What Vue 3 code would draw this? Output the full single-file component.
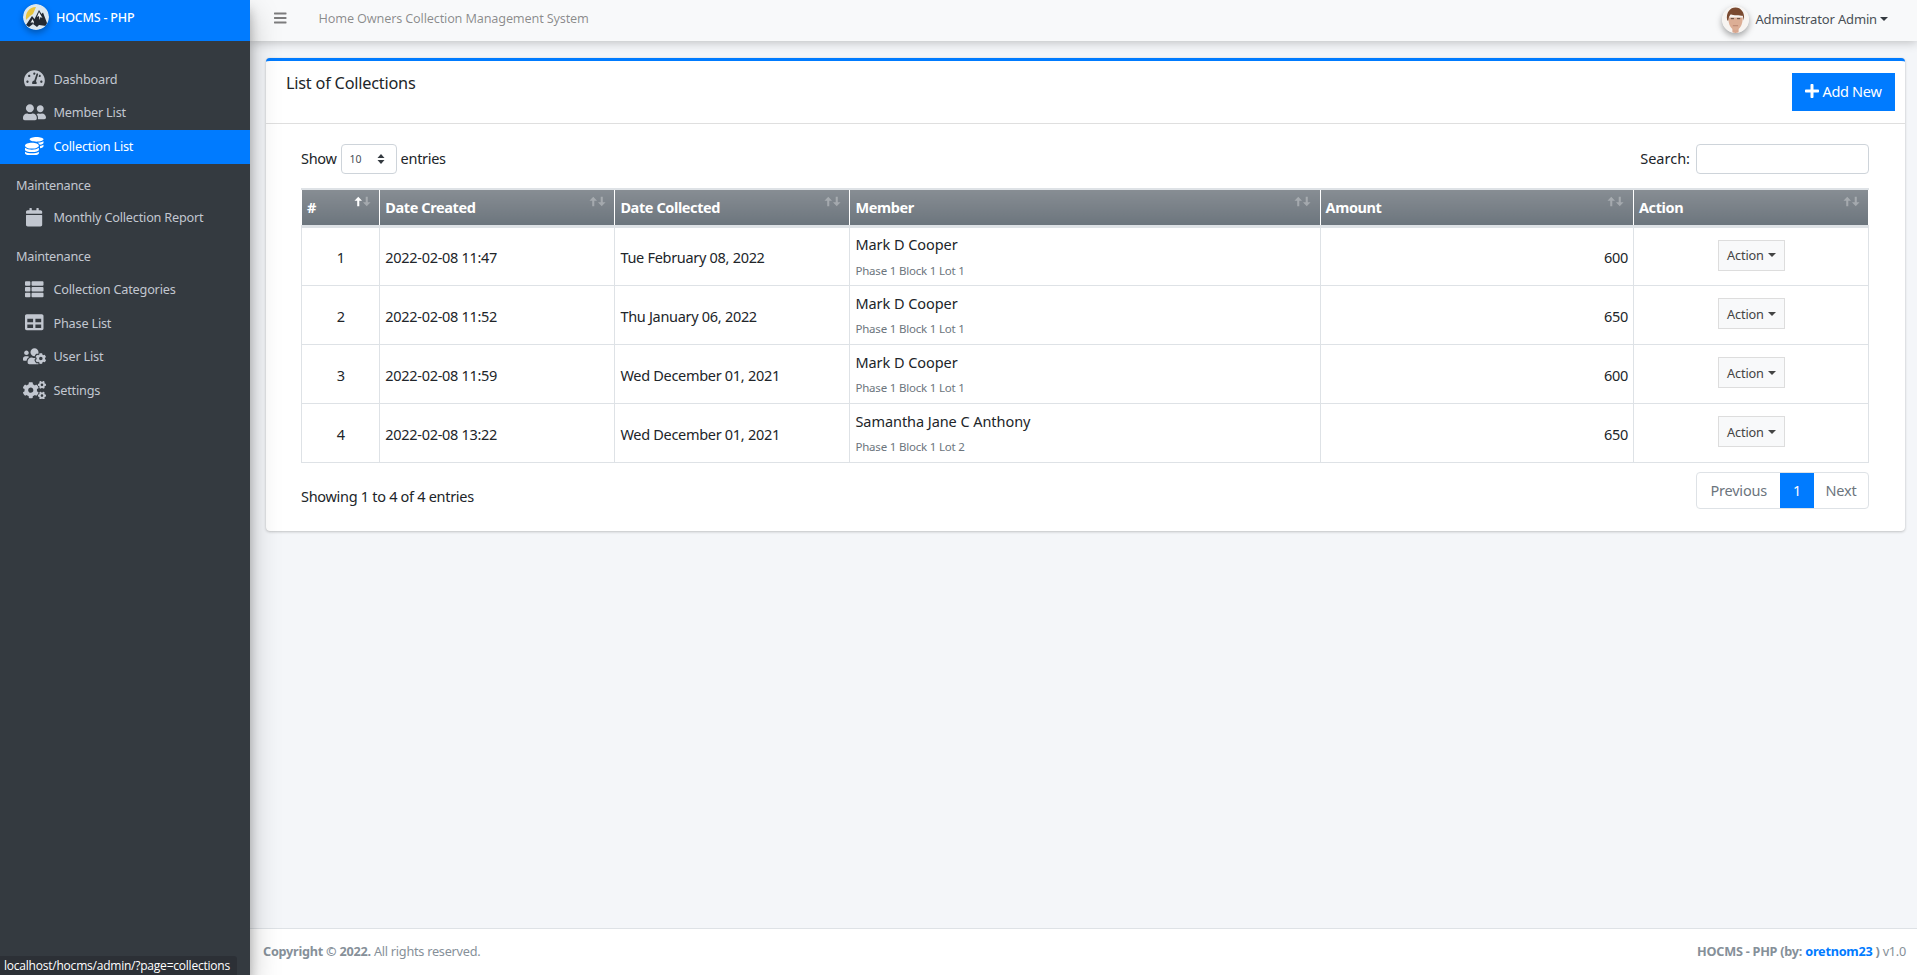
<script setup>
const icons = {
  gauge: ['0 0 576 512', 'M288 32C128.94 32 0 160.94 0 320c0 52.8 14.25 102.26 39.06 144.8 5.61 9.62 16.3 15.2 27.44 15.2h443c11.14 0 21.83-5.58 27.44-15.2C561.75 422.26 576 372.8 576 320c0-159.06-128.94-288-288-288zm0 64c14.71 0 26.58 10.13 30.32 23.65-1.11 2.26-2.64 4.23-3.45 6.67l-9.22 27.67c-5.13 3.49-10.97 6.01-17.64 6.01-17.67 0-32-14.33-32-32S270.33 96 288 96zM96 384c-17.67 0-32-14.33-32-32s14.33-32 32-32 32 14.33 32 32-14.33 32-32 32zm48-160c-17.67 0-32-14.33-32-32s14.33-32 32-32 32 14.33 32 32-14.33 32-32 32zm246.77-72.41l-61.33 184C343.13 347.33 352 364.54 352 384c0 11.72-3.38 22.55-8.88 32H232.88c-5.5-9.45-8.88-20.28-8.88-32 0-33.94 26.5-61.43 59.9-63.59l61.34-184.01c4.17-12.56 17.73-19.45 30.36-15.17 12.57 4.19 19.35 17.79 15.17 30.36zm14.66 57.2l15.52-46.55c3.47-1.29 7.13-2.23 11.05-2.23 17.67 0 32 14.33 32 32s-14.33 32-32 32c-11.38-.01-20.89-6.28-26.57-15.22zM480 384c-17.67 0-32-14.33-32-32s14.33-32 32-32 32 14.33 32 32-14.33 32-32 32z'],
  friends: ['0 0 640 512', 'M192 256c61.9 0 112-50.1 112-112S253.9 32 192 32 80 82.1 80 144s50.1 112 112 112zm76.8 32h-8.3c-20.8 10-43.9 16-68.5 16s-47.6-6-68.5-16h-8.3C51.6 288 0 339.6 0 403.2V432c0 26.5 21.5 48 48 48h288c26.5 0 48-21.5 48-48v-28.8c0-63.6-51.6-115.2-115.2-115.2zM480 256c53 0 96-43 96-96s-43-96-96-96-96 43-96 96 43 96 96 96zm48 32h-3.8c-13.9 4.8-28.6 8-44.2 8s-30.3-3.2-44.2-8H432c-20.4 0-39.2 5.9-55.7 15.4 24.4 26.3 39.7 61.2 39.7 99.8v38.4c0 2.2-.5 4.3-.6 6.4H592c26.5 0 48-21.5 48-48 0-61.9-50.1-112-112-112z'],
  coins: ['0 0 512 512', 'M0 405.3V448c0 35.3 86 64 192 64s192-28.7 192-64v-42.7C342.7 434.4 267.2 448 192 448S41.3 434.4 0 405.3zM320 128c106 0 192-28.7 192-64S426 0 320 0 128 28.7 128 64s86 64 192 64zM0 300.4V352c0 35.3 86 64 192 64s192-28.7 192-64v-51.6c-41.3 34-116.9 51.6-192 51.6S41.3 334.4 0 300.4zm416 11c57.3-11.1 96-31.7 96-55.4v-42.7c-23.2 16.4-57.3 27.6-96 34.5v63.6zM192 160C86 160 0 195.8 0 240s86 80 192 80 192-35.8 192-80-86-80-192-80zm219.3 56.3c60-10.8 100.7-32 100.7-56.3v-42.7c-35.5 25.1-96.5 38.6-160.7 41.8 29.5 14.3 51.2 33.5 60 57.2z'],
  calendar: ['0 0 448 512', 'M12 192h424c6.6 0 12 5.4 12 12v260c0 26.5-21.5 48-48 48H48c-26.5 0-48-21.5-48-48V204c0-6.6 5.4-12 12-12zm436-44v-36c0-26.5-21.5-48-48-48h-48V12c0-6.6-5.4-12-12-12h-40c-6.6 0-12 5.4-12 12v52H160V12c0-6.6-5.4-12-12-12h-40c-6.6 0-12 5.4-12 12v52H48C21.5 64 0 85.5 0 112v36c0 6.6 5.4 12 12 12h424c6.6 0 12-5.4 12-12z'],
  thList: ['0 0 512 512', 'M149.333 216v80c0 13.255-10.745 24-24 24H24c-13.255 0-24-10.745-24-24v-80c0-13.255 10.745-24 24-24h101.333c13.255 0 24 10.745 24 24zM0 376v80c0 13.255 10.745 24 24 24h101.333c13.255 0 24-10.745 24-24v-80c0-13.255-10.745-24-24-24H24c-13.255 0-24 10.745-24 24zM125.333 32H24C10.745 32 0 42.745 0 56v80c0 13.255 10.745 24 24 24h101.333c13.255 0 24-10.745 24-24V56c0-13.255-10.745-24-24-24zm80 448H488c13.255 0 24-10.745 24-24v-80c0-13.255-10.745-24-24-24H205.333c-13.255 0-24 10.745-24 24v80c0 13.255 10.745 24 24 24zm-24-424v80c0 13.255 10.745 24 24 24H488c13.255 0 24-10.745 24-24V56c0-13.255-10.745-24-24-24H205.333c-13.255 0-24 10.745-24 24zm24 264H488c13.255 0 24-10.745 24-24v-80c0-13.255-10.745-24-24-24H205.333c-13.255 0-24 10.745-24 24v80c0 13.255 10.745 24 24 24z'],
  table: ['0 0 512 512', 'M464 32H48C21.49 32 0 53.49 0 80v352c0 26.51 21.49 48 48 48h416c26.51 0 48-21.49 48-48V80c0-26.51-21.49-48-48-48zM224 416H64v-96h160v96zm0-160H64v-96h160v96zm224 160H288v-96h160v96zm0-160H288v-96h160v96z'],
  usersCog: ['0 0 640 512', 'M610.5 341.3c2.6-14.1 2.6-28.5 0-42.6l25.8-14.9c3-1.7 4.3-5.2 3.3-8.5-6.7-21.6-18.2-41.2-33.2-57.4-2.3-2.5-6-3.1-9-1.4l-25.8 14.9c-10.9-9.3-23.4-16.5-36.9-21.3v-29.8c0-3.4-2.4-6.4-5.7-7.1-22.3-5-45-4.8-66.2 0-3.3.7-5.7 3.7-5.7 7.1v29.8c-13.5 4.8-26 12-36.9 21.3l-25.8-14.9c-2.9-1.7-6.7-1.1-9 1.4-15 16.2-26.5 35.8-33.2 57.4-1 3.3.4 6.8 3.3 8.5l25.8 14.9c-2.6 14.1-2.6 28.5 0 42.6l-25.8 14.9c-3 1.7-4.3 5.2-3.3 8.5 6.7 21.6 18.2 41.1 33.2 57.4 2.3 2.5 6 3.1 9 1.4l25.8-14.9c10.9 9.3 23.4 16.5 36.9 21.3v29.8c0 3.4 2.4 6.4 5.7 7.1 22.3 5 45 4.8 66.2 0 3.3-.7 5.7-3.7 5.7-7.1v-29.8c13.5-4.8 26-12 36.9-21.3l25.8 14.9c2.9 1.7 6.7 1.1 9-1.4 15-16.2 26.5-35.8 33.2-57.4 1-3.3-.4-6.8-3.3-8.5l-25.8-14.9zM496 368.5c-26.8 0-48.5-21.8-48.5-48.5s21.8-48.5 48.5-48.5 48.5 21.8 48.5 48.5-21.7 48.5-48.5 48.5zM96 224c35.3 0 64-28.7 64-64s-28.7-64-64-64-64 28.7-64 64 28.7 64 64 64zm224 32c1.9 0 3.7-.5 5.6-.6 8.3-21.7 20.5-42.1 36.3-59.2 7.4-8 17.9-12.6 28.9-12.6 6.9 0 13.7 1.8 19.6 5.3l7.9 4.6c.8-.5 1.6-.9 2.4-1.4 7-14.6 11.2-30.8 11.2-48 0-61.9-50.1-112-112-112S208 82.1 208 144c0 61.9 50.1 112 112 112zm105.2 194.5c-2.3-1.2-4.6-2.6-6.8-3.9-8.2 4.8-15.3 9.8-27.5 9.8-10.9 0-21.4-4.6-28.9-12.6-18.3-19.8-32.3-43.9-40.2-69.6-10.7-34.5 24.9-49.7 25.8-50.3-.1-2.6-.1-5.2 0-7.8l-7.9-4.6c-3.8-2.2-7-5-9.8-8.1-3.3.2-6.5.6-9.8.6-24.6 0-47.6-6-68.5-16h-8.3C179.6 288 128 339.6 128 403.2V432c0 26.5 21.5 48 48 48h255.4c-3.7-6-6.2-12.8-6.2-20.3v-9.2zM173.1 274.6C161.5 263.1 145.6 256 128 256H64c-35.3 0-64 28.7-64 64v32c0 17.7 14.3 32 32 32h65.9c6.3-47.4 34.9-87.3 75.2-109.4z'],
  cogs: ['0 0 640 512', 'M512.1 191l-8.2 14.3c-3 5.3-9.4 7.5-15.1 5.4-11.8-4.4-22.6-10.7-32.1-18.6-4.6-3.8-5.8-10.5-2.8-15.7l8.2-14.3c-6.9-8-12.3-17.3-15.9-27.4h-16.5c-6 0-11.2-4.3-12.2-10.3-2-12-2.1-24.6 0-37.1 1-6 6.2-10.4 12.2-10.4h16.5c3.6-10.1 9-19.4 15.9-27.4l-8.2-14.3c-3-5.2-1.9-11.9 2.8-15.7 9.5-7.9 20.4-14.2 32.1-18.6 5.7-2.1 12.1.1 15.1 5.4l8.2 14.3c10.5-1.9 21.2-1.9 31.7 0L552 6.3c3-5.3 9.4-7.5 15.1-5.4 11.8 4.4 22.6 10.7 32.1 18.6 4.6 3.8 5.8 10.5 2.8 15.7l-8.2 14.3c6.9 8 12.3 17.3 15.9 27.4h16.5c6 0 11.2 4.3 12.2 10.3 2 12 2.1 24.6 0 37.1-1 6-6.2 10.4-12.2 10.4h-16.5c-3.6 10.1-9 19.4-15.9 27.4l8.2 14.3c3 5.2 1.9 11.9-2.8 15.7-9.5 7.9-20.4 14.2-32.1 18.6-5.7 2.1-12.1-.1-15.1-5.4l-8.2-14.3c-10.4 1.9-21.2 1.9-31.7 0zm-10.5-58.8c38.5 29.6 82.4-14.3 52.8-52.8-38.5-29.7-82.4 14.3-52.8 52.8zM386.3 286.1l33.7 16.8c10.1 5.8 14.5 18.1 10.5 29.1-8.9 24.2-26.4 46.4-42.6 65.8-7.4 8.9-20.2 11.1-30.3 5.3l-29.1-16.8c-16 13.7-34.6 24.6-54.9 31.7v33.6c0 11.6-8.3 21.6-19.7 23.6-24.6 4.2-50.4 4.4-75.9 0-11.5-2-20-11.9-20-23.6V418c-20.3-7.2-38.9-18-54.9-31.7L74 403c-10 5.8-22.9 3.6-30.3-5.3-16.2-19.4-33.3-41.6-42.2-65.7-4-10.9.4-23.2 10.5-29.1l33.3-16.8c-3.9-20.9-3.9-42.4 0-63.4L12 205.8c-10.1-5.8-14.6-18.1-10.5-29 8.9-24.2 26-46.4 42.2-65.8 7.4-8.9 20.2-11.1 30.3-5.3l29.1 16.8c16-13.7 34.6-24.6 54.9-31.7V57.1c0-11.5 8.2-21.5 19.6-23.5 24.6-4.2 50.5-4.4 76-.1 11.5 2 20 11.9 20 23.6v33.6c20.3 7.2 38.9 18 54.9 31.7l29.1-16.8c10-5.8 22.9-3.6 30.3 5.3 16.2 19.4 33.2 41.6 42.1 65.8 4 10.9.1 23.2-10 29.1l-33.7 16.8c3.9 21 3.9 42.5 0 63.5zm-117.6 21.1c59.2-77-28.7-164.9-105.7-105.7-59.2 77 28.7 164.9 105.7 105.7zm243.4 182.7l-8.2 14.3c-3 5.3-9.4 7.5-15.1 5.4-11.8-4.4-22.6-10.7-32.1-18.6-4.6-3.8-5.8-10.5-2.8-15.7l8.2-14.3c-6.9-8-12.3-17.3-15.9-27.4h-16.5c-6 0-11.2-4.3-12.2-10.3-2-12-2.1-24.6 0-37.1 1-6 6.2-10.4 12.2-10.4h16.5c3.6-10.1 9-19.4 15.9-27.4l-8.2-14.3c-3-5.2-1.9-11.9 2.8-15.7 9.5-7.9 20.4-14.2 32.1-18.6 5.7-2.1 12.1.1 15.1 5.4l8.2 14.3c10.5-1.9 21.2-1.9 31.7 0l8.2-14.3c3-5.3 9.4-7.5 15.1-5.4 11.8 4.4 22.6 10.7 32.1 18.6 4.6 3.8 5.8 10.5 2.8 15.7l-8.2 14.3c6.9 8 12.3 17.3 15.9 27.4h16.5c6 0 11.2 4.3 12.2 10.3 2 12 2.1 24.6 0 37.1-1 6-6.2 10.4-12.2 10.4h-16.5c-3.6 10.1-9 19.4-15.9 27.4l8.2 14.3c3 5.2 1.9 11.9-2.8 15.7-9.5 7.9-20.4 14.2-32.1 18.6-5.7 2.1-12.1-.1-15.1-5.4l-8.2-14.3c-10.4 1.9-21.2 1.9-31.7 0zM501.6 431c38.5 29.6 82.4-14.3 52.8-52.8-38.5-29.6-82.4 14.3-52.8 52.8z'],
}

const barsPath = 'M16 132h416c8.837 0 16-7.163 16-16V76c0-8.837-7.163-16-16-16H16C7.163 60 0 67.163 0 76v40c0 8.837 7.163 16 16 16zm0 160h416c8.837 0 16-7.163 16-16v-40c0-8.837-7.163-16-16-16H16c-8.837 0-16 7.163-16 16v40c0 8.837 7.163 16 16 16zm0 160h416c8.837 0 16-7.163 16-16v-40c0-8.837-7.163-16-16-16H16c-8.837 0-16 7.163-16 16v40c0 8.837 7.163 16 16 16z'
const plusPath = 'M416 208H272V64c0-17.67-14.33-32-32-32h-32c-17.67 0-32 14.33-32 32v144H32c-17.67 0-32 14.33-32 32v32c0 17.67 14.33 32 32 32h144v144c0 17.67 14.33 32 32 32h32c17.67 0 32-14.33 32-32V304h144c17.67 0 32-14.33 32-32v-32c0-17.67-14.33-32-32-32z'

const menu = [
  { label: 'Dashboard', icon: 'gauge' },
  { label: 'Member List', icon: 'friends' },
  { label: 'Collection List', icon: 'coins', active: true },
  { header: 'Maintenance' },
  { label: 'Monthly Collection Report', icon: 'calendar' },
  { header: 'Maintenance' },
  { label: 'Collection Categories', icon: 'thList' },
  { label: 'Phase List', icon: 'table' },
  { label: 'User List', icon: 'usersCog' },
  { label: 'Settings', icon: 'cogs' },
]

const columns = [
  { label: '#', width: '5%', sorted: true },
  { label: 'Date Created', width: '15%' },
  { label: 'Date Collected', width: '15%' },
  { label: 'Member', width: '30%' },
  { label: 'Amount', width: '20%' },
  { label: 'Action', width: '15%' },
]

const rows = [
  { id: 1, created: '2022-02-08 11:47', collected: 'Tue February 08, 2022', name: 'Mark D Cooper', lot: 'Phase 1 Block 1 Lot 1', amount: 600 },
  { id: 2, created: '2022-02-08 11:52', collected: 'Thu January 06, 2022', name: 'Mark D Cooper', lot: 'Phase 1 Block 1 Lot 1', amount: 650 },
  { id: 3, created: '2022-02-08 11:59', collected: 'Wed December 01, 2021', name: 'Mark D Cooper', lot: 'Phase 1 Block 1 Lot 1', amount: 600 },
  { id: 4, created: '2022-02-08 13:22', collected: 'Wed December 01, 2021', name: 'Samantha Jane C Anthony', lot: 'Phase 1 Block 1 Lot 2', amount: 650 },
]
</script>

<template>
  <div class="wrapper">
    <aside class="sidebar">
      <div class="brand">
        <svg class="logo" viewBox="0 0 26 26">
          <defs>
            <clipPath id="logo-clip"><circle cx="13" cy="13" r="13" /></clipPath>
          </defs>
          <g clip-path="url(#logo-clip)">
            <rect width="26" height="26" fill="#dde8ef" />
            <path d="M3 16C2 9 6 3 13 3l-3 7-3 2z" fill="#e8c53f" />
            <path d="M3 21l6-9 2.500 3 4.500-9 2.500 4 1.500-1.500L24 19l-1 3-7-1-2 2-4-3-4 3z" fill="#232a33" />
            <path d="M16 8l-2 5 2-1 .5 4 1-3 2 1zM9.500 15l-2 4 2-1 .5 2 1-2z" fill="#eef3f6" />
          </g>
        </svg>
        <span class="brand-text">HOCMS - PHP</span>
      </div>
      <nav class="menu">
        <template v-for="(item, i) in menu" :key="i">
          <div v-if="item.header" class="menu-header">{{ item.header }}</div>
          <a v-else :class="['menu-link', { active: item.active }]">
            <span class="menu-icon">
              <svg :viewBox="icons[item.icon][0]"><path :d="icons[item.icon][1]" /></svg>
            </span>
            <span class="menu-label">{{ item.label }}</span>
          </a>
        </template>
      </nav>
    </aside>

    <div class="main">
      <header class="navbar">
        <svg class="bars" viewBox="0 0 448 512"><path :d="barsPath" /></svg>
        <span class="nav-title">Home Owners Collection Management System</span>
        <div class="user">
          <svg class="avatar" viewBox="0 0 26 26">
            <defs>
              <clipPath id="avatar-clip"><circle cx="13" cy="13" r="13" /></clipPath>
            </defs>
            <g clip-path="url(#avatar-clip)">
              <rect width="26" height="26" fill="#f7f4f1" />
              <path d="M10 20h6v6h-6z" fill="#d8a78f" />
              <path d="M6 11c0 7 3 12 7 12s7-5 7-12z" fill="#dcae95" />
              <path d="M5 14C3.500 6 8 1.500 13 1.500S22.500 6 21 14L20 9.500C17 9 11 9.500 8.500 8 7 9.500 6.500 11 6 14z" fill="#7a4a30" />
              <rect x="8.500" y="11.500" width="3" height="1.200" fill="#6d5546" />
              <rect x="14.500" y="11.500" width="3" height="1.200" fill="#6d5546" />
              <path d="M10.500 19h5" stroke="#b27d68" stroke-width=".8" />
            </g>
          </svg>
          <span class="user-name">Adminstrator Admin</span>
          <span class="caret"></span>
        </div>
      </header>

      <main class="content">
        <section class="card">
          <div class="card-header">
            <h3 class="card-title">List of Collections</h3>
            <button class="btn-add">
              <svg viewBox="0 0 448 512"><path :d="plusPath" /></svg>
              Add New
            </button>
          </div>
          <div class="card-body">
            <div class="table-tools">
              <label class="length">
                Show
                <span class="select-wrap">
                  <select class="length-select"><option>10</option></select>
                  <svg class="select-arrows" viewBox="0 0 8 12"><path d="M4 1l3.500 4h-7zM4 11L.500 7h7z" /></svg>
                </span>
                entries
              </label>
              <label class="search">
                Search:
                <input class="search-input" type="search" />
              </label>
            </div>

            <table class="data-table">
              <colgroup>
                <col v-for="c in columns" :key="c.label" :style="{ width: c.width }" />
              </colgroup>
              <thead>
                <tr>
                  <th v-for="c in columns" :key="c.label">
                    {{ c.label }}
                    <svg class="sort-arrows" viewBox="0 0 18 11">
                      <path :class="{ on: c.sorted }" d="M4.500.500l4 4.200H5.600v5.800H3.400V4.700H.500z" />
                      <path d="M13.500 10.500l-4-4.200h2.900V.500h2.200v5.800h2.900z" />
                    </svg>
                  </th>
                </tr>
              </thead>
              <tbody>
                <tr v-for="r in rows" :key="r.id">
                  <td class="center">{{ r.id }}</td>
                  <td>{{ r.created }}</td>
                  <td>{{ r.collected }}</td>
                  <td>
                    <div class="member-name">{{ r.name }}</div>
                    <div class="member-lot">{{ r.lot }}</div>
                  </td>
                  <td class="right">{{ r.amount }}</td>
                  <td class="center">
                    <button class="btn-action">Action<span class="caret small"></span></button>
                  </td>
                </tr>
              </tbody>
            </table>

            <div class="table-foot">
              <div class="table-info">Showing 1 to 4 of 4 entries</div>
              <div class="pager">
                <a class="page">Previous</a>
                <a class="page current">1</a>
                <a class="page">Next</a>
              </div>
            </div>
          </div>
        </section>
      </main>

      <footer class="footer">
        <div><strong>Copyright © 2022.</strong> All rights reserved.</div>
        <div><strong>HOCMS - PHP (by: <a class="author">oretnom23</a> )</strong> v1.0</div>
      </footer>
    </div>

    <div class="status-bar">localhost/hocms/admin/?page=collections</div>
  </div>
</template>

<style>
html, body {
  margin: 0;
  height: 100%;
  overflow: hidden;
}
</style>

<style scoped>
.wrapper {
  display: flex;
  height: 975px;
  font-family: "Noto Sans", "Open Sans", sans-serif;
  font-size: 14.5px;
  letter-spacing: -0.3px;
  color: #212529;
  background: #f4f6f9;
}

.sidebar {
  position: relative;
  z-index: 3;
  flex: 0 0 250px;
  background: #343a40;
  box-shadow: 0 14px 28px rgba(0, 0, 0, .25), 0 10px 10px rgba(0, 0, 0, .22);
}

.brand {
  display: flex;
  align-items: center;
  height: 41px;
  padding: 0 0 7px 23px;
  box-sizing: border-box;
  background: #007bff;
  color: #fff;
}

.logo {
  width: 26px;
  height: 26px;
  border-radius: 50%;
  box-shadow: 0 3px 6px rgba(0, 0, 0, .3);
}

.brand-text {
  margin-left: 7px;
  font-size: 12.500px;
  font-weight: 500;
  letter-spacing: -0.2px;
}

.menu {
  padding-top: 21.800px;
}

.menu-link {
  display: flex;
  align-items: center;
  height: 33.600px;
  padding-left: 23px;
  box-sizing: border-box;
  font-size: 12.700px;
  letter-spacing: -0.2px;
  color: #c2c7d0;
}

.menu-link.active {
  background: #007bff;
  color: #fff;
}

.menu-icon {
  display: flex;
  justify-content: center;
  width: 23px;
  margin-right: 7.500px;
  margin-bottom: 2px;
}

.menu-icon svg {
  height: 18.500px;
  max-width: 23px;
  fill: currentColor;
}

.menu-label {
  padding-bottom: 2px;
}

.menu-header {
  height: 38px;
  padding: 12px 0 0 16px;
  box-sizing: border-box;
  font-size: 12.700px;
  letter-spacing: -0.25px;
  color: #c2c7d0;
}

.main {
  flex: 1;
  display: flex;
  flex-direction: column;
  min-width: 0;
}

.navbar {
  position: relative;
  z-index: 2;
  display: flex;
  align-items: center;
  height: 41px;
  padding-left: 24px;
  box-sizing: border-box;
  background: #f8f9fa;
  box-shadow: 0 1px 10px rgba(0, 0, 0, .25);
}

.bars {
  width: 12.500px;
  height: 16px;
  fill: rgba(0, 0, 0, .5);
  margin-bottom: 5px;
}

.nav-title {
  margin: 0 0 0 32px;
  padding-bottom: 5px;
  font-size: 12.700px;
  letter-spacing: -0.18px;
  color: rgba(0, 0, 0, .45);
}

.user {
  display: flex;
  align-items: center;
  margin-left: auto;
  padding: 0 29px 3px 0;
}

.avatar {
  width: 27px;
  height: 27px;
  border-radius: 50%;
  box-shadow: 0 3px 6px rgba(0, 0, 0, .35);
}

.user-name {
  margin-left: 6px;
  font-size: 13px;
  letter-spacing: -0.15px;
  color: #4a5056;
}

.caret {
  display: inline-block;
  margin-left: 3px;
  border-top: 4px solid #343a40;
  border-left: 4px solid transparent;
  border-right: 4px solid transparent;
}

.caret.small {
  margin-left: 4px;
  border-top: 4.800px solid #444;
  border-left-width: 4.800px;
  border-right-width: 4.800px;
}

.content {
  flex: 1;
  padding: 17px 12px 0 16px;
}

.card {
  background: #fff;
  border-top: 3px solid #007bff;
  border-radius: 4px;
  box-shadow: 0 0 1px rgba(0, 0, 0, .125), 0 1px 3px rgba(0, 0, 0, .2);
}

.card-header {
  display: flex;
  justify-content: space-between;
  height: 63px;
  padding: 12px 10px 0 20px;
  box-sizing: border-box;
  border-bottom: 1px solid rgba(0, 0, 0, .125);
}

.card-title {
  margin: -2px 0 0;
  font-size: 16.300px;
  font-weight: 400;
  letter-spacing: -0.22px;
  line-height: 24px;
}

.btn-add {
  display: flex;
  align-items: center;
  justify-content: center;
  gap: 3px;
  width: 103px;
  height: 38px;
  padding: 0 0 2px;
  border: 0;
  background: #007bff;
  color: #fff;
  font: inherit;
  letter-spacing: inherit;
}

.btn-add svg {
  width: 14px;
  height: 16px;
  fill: #fff;
}

.card-body {
  padding: 20px 36px 22.500px 35px;
}

.table-tools {
  display: flex;
  justify-content: space-between;
  align-items: center;
  height: 30px;
  margin-bottom: 14px;
}

.length,
.search {
  display: flex;
  align-items: center;
  padding-bottom: 3px;
}

.search {
  letter-spacing: 0;
}

.select-wrap {
  position: relative;
  margin: 0 4px -3px 4px;
}

.length-select {
  display: block;
  appearance: none;
  width: 56px;
  height: 30px;
  padding: 0 0 0 8px;
  border: 1px solid #ced4da;
  border-radius: 4px;
  background: #fff;
  font: 10.500px "Noto Sans", sans-serif;
  color: #495057;
}

.select-arrows {
  position: absolute;
  right: 12px;
  top: 9px;
  width: 8px;
  height: 12px;
  fill: #343a40;
}

.search-input {
  width: 173px;
  height: 30px;
  margin: 0 0 -3px 6px;
  padding: 0 8px;
  box-sizing: border-box;
  border: 1px solid #ced4da;
  border-radius: 4px;
  background: #fff;
}

.data-table {
  width: 100%;
  table-layout: fixed;
  border-collapse: collapse;
  border: 1px solid #dee2e6;
}

.data-table th {
  position: relative;
  height: 37px;
  padding: 0 5px;
  box-sizing: border-box;
  border-top: 2px solid #dee2e6;
  border-bottom: 3px solid #dee2e6;
  border-left: 1px solid #fff;
  border-right: 1px solid #fff;
  background: linear-gradient(180deg, #878d93, #6c757d);
  color: #fff;
  font-weight: 700;
  letter-spacing: -0.4px;
  text-align: left;
}

.sort-arrows {
  position: absolute;
  top: 6px;
  right: 8.500px;
  width: 17px;
  height: 11px;
  fill: rgba(255, 255, 255, .3);
}

.sort-arrows .on {
  fill: #fff;
}

.data-table td {
  height: 59px;
  padding: 2px 5px 0;
  box-sizing: border-box;
  border: 1px solid #dee2e6;
  vertical-align: middle;
}

.data-table td.center {
  text-align: center;
}

.data-table td.right {
  text-align: right;
}

.member-name {
  line-height: 24px;
  margin-top: -2px;
  letter-spacing: -0.06px;
}

.member-lot {
  margin-top: 5.500px;
  line-height: 18px;
  font-size: 11.500px;
  letter-spacing: -0.2px;
  color: #6c757d;
}

.btn-action {
  display: inline-flex;
  align-items: center;
  justify-content: center;
  width: 67px;
  height: 31px;
  margin: 0 0 4px 1px;
  padding: 0;
  border: 1px solid #ddd;
  background: #f8f9fa;
  font: inherit;
  font-size: 12.700px;
  letter-spacing: -0.15px;
  color: #444;
}

.table-foot {
  display: flex;
  justify-content: space-between;
  align-items: flex-start;
  margin-top: 9px;
}

.table-info {
  padding-top: 14px;
}

.pager {
  display: flex;
  height: 37px;
  box-sizing: border-box;
  border: 1px solid #dee2e6;
  border-radius: 4px;
  overflow: hidden;
  letter-spacing: -0.2px;
}

.page {
  display: flex;
  align-items: center;
  padding: 0 13px;
  color: #6c757d;
}

.page:last-child {
  padding: 0 11.500px;
}

.page.current {
  width: 34px;
  margin: -1px 0;
  padding: 0;
  justify-content: center;
  background: #007bff;
  color: #fff;
}

.footer {
  display: flex;
  justify-content: space-between;
  align-items: center;
  height: 47px;
  padding: 0 11px 2px 13px;
  box-sizing: border-box;
  border-top: 1px solid #dee2e6;
  background: #fff;
  font-size: 12.700px;
  letter-spacing: -0.25px;
  color: #869099;
}

.author {
  color: #007bff;
}

.status-bar {
  position: fixed;
  left: 0;
  bottom: 0;
  z-index: 5;
  width: 237px;
  height: 19px;
  padding-left: 4px;
  box-sizing: border-box;
  border-top-right-radius: 3px;
  background: #2c3036;
  color: #fff;
  font: 12px/20px "Open Sans", sans-serif;
  letter-spacing: -0.22px;
  white-space: nowrap;
}
</style>
